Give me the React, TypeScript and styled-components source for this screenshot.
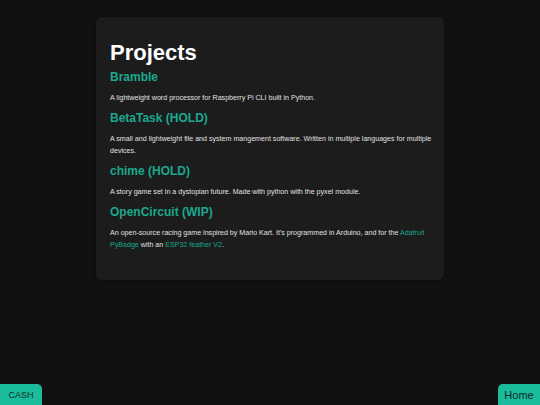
import styled, { createGlobalStyle } from "styled-components";

const GlobalStyle = createGlobalStyle`
  html, body {
    margin: 0;
    padding: 0;
    background: #111111;
    font-family: "Liberation Sans", Arial, sans-serif;
    color: #e6e6e6;
  }
`;

const Page = styled.div`
  min-height: 405px;
  display: flex;
  justify-content: center;
  align-items: flex-start;
  padding-top: 17px;
  box-sizing: border-box;
`;

const Card = styled.section`
  width: 348px;
  background: #1c1c1c;
  border-radius: 6px;
  padding: 23px 12px 22px 14px;
  box-sizing: border-box;
  box-shadow: 0 0 4px rgba(0, 0, 0, 0.4);
`;

const Title = styled.h1`
  margin: 0 0 4px;
  font-size: 22px;
  font-weight: bold;
  color: #ffffff;
`;

const ProjectName = styled.h2`
  margin: 0;
  font-size: 12px;
  font-weight: bold;
  color: #1aa88f;
`;

const Description = styled.p`
  margin: 8px 0 7px;
  font-size: 7.1px;
  line-height: 12px;
  color: #e0e0e0;
`;

const Link = styled.a`
  color: #1aa88f;
  text-decoration: none;
`;

const CornerButton = styled.button<{ $side: "left" | "right"; $size: number }>`
  position: fixed;
  bottom: 0;
  ${(p) => (p.$side === "left" ? "left: 0;" : "right: 0;")}
  width: 42px;
  height: 21px;
  border: none;
  padding: 0;
  background: #1abc9c;
  color: #0e2a24;
  font-family: "Liberation Sans", Arial, sans-serif;
  font-size: ${(p) => p.$size}px;
  border-radius: ${(p) => (p.$side === "left" ? "0 5px 0 0" : "5px 0 0 0")};
`;

const projects = [
  {
    name: "Bramble",
    text: "A lightweight word processor for Raspberry Pi CLI built in Python.",
  },
  {
    name: "BetaTask (HOLD)",
    text: "A small and lightweight file and system mangement software. Written in multiple languages for multiple devices.",
  },
  {
    name: "chime (HOLD)",
    text: "A story game set in a dystopian future. Made with python with the pyxel module.",
  },
];

export default function App() {
  return (
    <>
      <GlobalStyle />
      <Page>
        <Card>
          <Title>Projects</Title>
          {projects.map((p) => (
            <div key={p.name}>
              <ProjectName>{p.name}</ProjectName>
              <Description>{p.text}</Description>
            </div>
          ))}
          <ProjectName>OpenCircuit (WIP)</ProjectName>
          <Description>
            An open-source racing game inspired by Mario Kart. It's programmed in Arduino, and for the{" "}
            <Link href="#">Adafruit PyBadge</Link> with an <Link href="#">ESP32 feather V2</Link>.
          </Description>
        </Card>
      </Page>
      <CornerButton $side="left" $size={9}>CASH</CornerButton>
      <CornerButton $side="right" $size={11}>Home</CornerButton>
    </>
  );
}
